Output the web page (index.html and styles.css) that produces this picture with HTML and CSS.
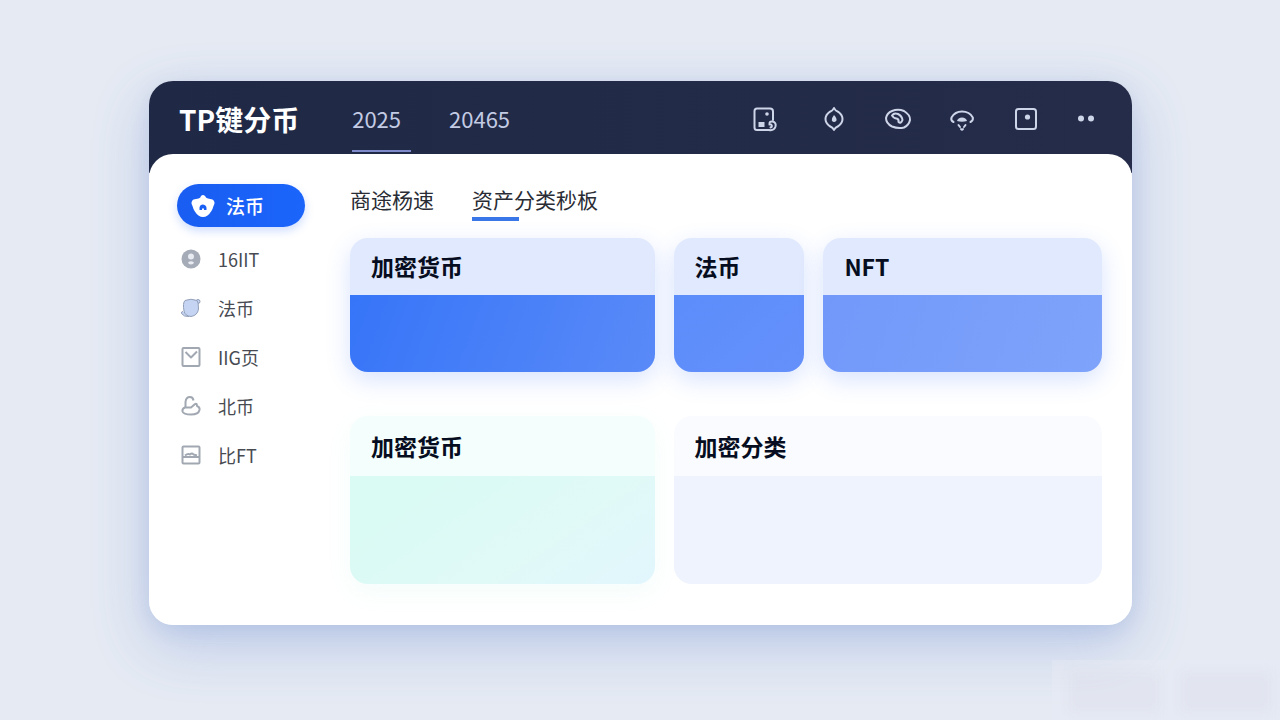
FILE: index.html
```html
<!DOCTYPE html>
<html lang="zh-CN">
<head>
    <meta charset="utf-8">
    <meta name="viewport" content="width=device-width, initial-scale=1">
    <title>TP键分币</title>
    <link rel="stylesheet" href="styles.css">
</head>
<body>
    <div class="window">
        <header class="topbar">
            <h1 class="brand">TP键分币</h1>
            <nav class="topnav">
                <a href="#" class="topnav-link active">2025</a>
                <a href="#" class="topnav-link">20465</a>
            </nav>
            <div class="actions">
                <button class="icon-button" aria-label="Files">
                    <svg width="38" height="28" viewBox="0 0 38 28">
                        <path d="M17 25H11Q8.500 25 8.500 22.500V6Q8.500 3.500 11 3.500H24Q27 3.500 27 6.500V15"/>
                        <path d="M23.500 19.500Q23 16 26.500 16.500Q30.500 17.500 29.500 21.500Q28 26 23 25L17 25M25 19.500Q27 21.500 24.500 22.500"/>
                        <rect class="fill" x="12.500" y="17" width="6" height="5"/>
                        <circle class="fill" cx="21" cy="9" r="1.800"/>
                    </svg>
                </button>
                <button class="icon-button" aria-label="Location">
                    <svg width="28" height="28" viewBox="0 0 28 28">
                        <path d="M14 3Q15 5.500 18.500 7Q22.500 10 22.500 14Q22.500 18 18.500 21Q15 22.500 14 25Q13 22.500 9.500 21Q5.500 18 5.500 14Q5.500 10 9.500 7Q13 5.500 14 3Z"/>
                        <path class="fill" d="M14 10Q17 13 16.500 15.500Q14 18.500 11.800 15.500Q11.500 13 14 10Z"/>
                    </svg>
                </button>
                <button class="icon-button" aria-label="View">
                    <svg width="28" height="28" viewBox="0 0 28 28">
                        <path d="M8 6Q14 3.500 20 6Q26.500 10 26 15Q25 20 20 22.500Q14 24 8 21.500Q2 18.500 2 13Q3 8 8 6Z"/>
                        <path d="M8 10.500Q10 7.500 14 9Q18 11 18.500 15Q17 19 14.500 17Q15 14 12.500 13.500Q10 13.500 8 10.500Z"/>
                    </svg>
                </button>
                <button class="icon-button" aria-label="Network">
                    <svg width="28" height="28" viewBox="0 0 28 28">
                        <path d="M5.500 17Q2.500 15.500 3.500 12.500Q7 6.500 14 6.500Q21.500 6.500 24.800 12.500Q25.500 15.500 22.500 17"/>
                        <path class="fill" d="M9 16Q10 12.500 14 12.500Q18 12.500 19 16Q14 17.500 9 16Z"/>
                        <path d="M10.500 20L12 22M17.500 20L16 22M13 24Q14 25.500 15 24"/>
                    </svg>
                </button>
                <button class="icon-button" aria-label="Card">
                    <svg width="28" height="28" viewBox="0 0 28 28">
                        <rect x="4" y="4" width="20" height="20" rx="2.500"/>
                        <circle class="fill" cx="15.500" cy="12" r="2.600"/>
                    </svg>
                </button>
                <button class="icon-button" aria-label="More">
                    <svg width="20" height="28" viewBox="0 0 20 28">
                        <circle class="fill" cx="5" cy="13.500" r="3"/>
                        <circle class="fill" cx="15" cy="13.500" r="3"/>
                    </svg>
                </button>
            </div>
        </header>

        <div class="panel">
            <nav class="sidebar">
                <a href="#" class="side-active">
                    <svg width="26" height="26" viewBox="0 0 26 26">
                        <path fill="#fff" d="M8.500 5.500Q10.500 5 11 3Q13 1 15 3Q16 5 18 5.500L22.500 6.500Q26 9 23.500 13Q22 19 17.500 22.500Q13 25.500 8.500 22.500Q4 19 2.500 13Q0 9 3.500 6.500Z"/>
                        <path fill="#1a60f5" d="M9.500 17V14.500Q10 11.500 13 11.500Q16.500 12 16.500 15V17H14V15.500H12V17Z"/>
                    </svg>
                    <span>法币</span>
                </a>
                <a href="#" class="side-link">
                    <svg width="22" height="22" viewBox="0 0 22 22">
                        <circle cx="11" cy="11" r="9.500" fill="#a5acb8"/>
                        <circle cx="11" cy="8.500" r="3" fill="#e8ebf2"/>
                        <path d="M8 14.500Q11 12 14 14.500Q13.500 16.500 11 16.500Q8.500 16.500 8 14.500Z" fill="#e8ebf2"/>
                    </svg>
                    <span>16IIT</span>
                </a>
                <a href="#" class="side-link">
                    <svg width="22" height="22" viewBox="0 0 22 22" fill="#c5d4f3" stroke="#929fb9">
                        <circle cx="18" cy="4.500" r="2"/>
                        <path d="M3 14.500Q1 14.500 1.500 16.500Q4 20 9 19.500"/>
                        <path d="M5 3.500Q11 1 17 3.500Q18.500 5 18.500 12Q17.500 18.500 11 19.500Q5 19 4 14Q2.500 6 5 3.500Z"/>
                    </svg>
                    <span>法币</span>
                </a>
                <a href="#" class="side-link">
                    <svg class="line-icon" width="22" height="22" viewBox="0 0 22 22">
                        <rect x="2.500" y="2" width="17" height="18" rx="1"/>
                        <path d="M5.500 6L11 11.500L17 5.500"/>
                    </svg>
                    <span>IIG页</span>
                </a>
                <a href="#" class="side-link">
                    <svg class="line-icon" width="22" height="22" viewBox="0 0 22 22">
                        <path d="M5.500 12V7Q6 2 10 2Q13 2 13.500 5.500"/>
                        <path d="M5 12.500H11L14.500 9.500Q17 7.500 17 11Q20 12 19.500 15Q18.500 19.500 11 19.500Q3.500 19.500 2.500 16.500Q2 13.500 5 12.500Z"/>
                    </svg>
                    <span>北币</span>
                </a>
                <a href="#" class="side-link">
                    <svg class="line-icon" width="22" height="22" viewBox="0 0 22 22">
                        <rect x="2.500" y="2.500" width="17" height="17" rx="1"/>
                        <path d="M5 11.500Q8 9 10 10.500Q12 8.500 13.500 10.500L17 11.500M3 13H19"/>
                    </svg>
                    <span>比FT</span>
                </a>
            </nav>

            <main class="content">
                <div class="tabs">
                    <button class="tab">商途杨速</button>
                    <button class="tab selected">资产分类秒板</button>
                </div>
                <div class="cards">
                    <section class="card crypto">
                        <h2 class="card-title">加密货币</h2>
                        <div class="card-body"></div>
                    </section>
                    <section class="card fiat">
                        <h2 class="card-title">法币</h2>
                        <div class="card-body"></div>
                    </section>
                    <section class="card nft">
                        <h2 class="card-title">NFT</h2>
                        <div class="card-body"></div>
                    </section>
                    <section class="card tall mint">
                        <h2 class="card-title">加密货币</h2>
                        <div class="card-body"></div>
                    </section>
                    <section class="card tall category">
                        <h2 class="card-title">加密分类</h2>
                        <div class="card-body"></div>
                    </section>
                </div>
            </main>
        </div>
    </div>
    <div class="watermark" aria-hidden="true">
        <span class="smudge"></span>
        <span class="smudge"></span>
    </div>
</body>
</html>
```
FILE: styles.css
```css
/* Global styles */
* {
    box-sizing: border-box;
}

body {
    margin: 0;
    padding: 81px 148px 32px 149px;
    min-height: 100vh;
    position: relative;
    overflow-x: hidden;
    background-color: #e5eaf3;
    color: #070d20;
    font-family: "Noto Sans CJK SC", "Noto Sans", sans-serif;
}

a {
    color: inherit;
    text-decoration: none;
}

button {
    padding: 0;
    border: none;
    background: none;
    color: inherit;
    font-family: inherit;
    cursor: pointer;
}

svg {
    display: block;
    flex-shrink: 0;
}

/* Window */
.window {
    border-radius: 24px;
    box-shadow: 0 20px 56px rgba(75, 115, 205, 0.28), 0 4px 20px rgba(75, 110, 180, 0.12);
}

/* Top bar, continues behind the rounded top of the panel */
.topbar {
    display: flex;
    align-items: flex-start;
    height: 92px;
    padding: 0 36px 0 30px;
    border-radius: 24px 24px 0 0;
    background: linear-gradient(90deg, #1f2945, #242c49);
    color: #c3cbe4;
}

.brand {
    margin: 0 53px 0 0;
    color: #fff;
    font-size: 28px;
    line-height: 76px;
    white-space: nowrap;
}

.topnav {
    display: flex;
    gap: 38px;
}

.topnav-link {
    height: 71px;
    padding-right: 10px;
    font-size: 22px;
    line-height: 74px;
}

.topnav-link.active {
    border-bottom: 2px solid #7f8acb;
}

.actions {
    display: flex;
    gap: 36px;
    margin-left: auto;
    padding-top: 24px;
}

.icon-button svg {
    fill: none;
    stroke: #cdd5e9;
    stroke-width: 2;
    stroke-linecap: round;
    stroke-linejoin: round;
}

.icon-button .fill {
    fill: #cdd5e9;
    stroke: none;
}

/* Panel */
.panel {
    display: flex;
    gap: 45px;
    margin-top: -19px;
    padding: 30px 30px 41px 28px;
    border-radius: 24px;
    background-color: #fff;
}

/* Sidebar */
.sidebar {
    flex: 0 0 128px;
}

.side-active {
    display: flex;
    align-items: center;
    gap: 10px;
    height: 43px;
    margin-bottom: 7px;
    padding-left: 13px;
    border-radius: 22px;
    background: linear-gradient(90deg, #195df2, #1b65fb);
    box-shadow: 0 4px 10px rgba(30, 100, 250, 0.22);
    color: #fff;
    font-size: 19px;
    font-weight: 500;
}

.side-link {
    display: flex;
    align-items: center;
    gap: 16px;
    height: 49px;
    padding-left: 3px;
    color: #484b52;
    font-size: 18px;
}

.line-icon {
    fill: none;
    stroke: #a2a8b2;
    stroke-width: 2;
    stroke-linejoin: round;
}

/* Tabs */
.content {
    flex: 1;
    min-width: 0;
}

.tabs {
    display: flex;
    gap: 38px;
    margin-bottom: 17px;
}

.tab {
    height: 37px;
    padding-bottom: 6px;
    color: #292c34;
    font-size: 21px;
    line-height: 31px;
}

.tab.selected {
    background: linear-gradient(#3976e8, #3976e8) left bottom / 47px 4px no-repeat;
}

/* Cards */
.cards {
    display: grid;
    grid-template-columns: 305fr 131fr 279fr;
    gap: 44px 19px;
}

.card {
    border-radius: 18px;
    background-color: #e0e9fd;
    box-shadow: 0 8px 24px rgba(60, 115, 250, 0.2);
}

.card-title {
    margin: 0;
    padding-left: 21px;
    font-size: 23px;
    font-weight: 700;
    line-height: 57px;
}

.card-body {
    height: 77px;
    border-radius: 0 0 18px 18px;
}

.crypto .card-body {
    background: linear-gradient(110deg, #3675f8, #5a8af8);
}

.fiat .card-body {
    background: linear-gradient(135deg, #5b8dfa, #6590fb);
}

.nft .card-body {
    background: linear-gradient(110deg, #7299fa, #7ea3fb);
}

.tall .card-title {
    line-height: 60px;
}

.tall .card-body {
    height: 108px;
}

.mint {
    background-color: #f4fefc;
    box-shadow: 0 8px 24px rgba(110, 225, 205, 0.08);
}

.mint .card-body {
    background: linear-gradient(145deg, #dafaf4 20%, #e0faf7 60%, #e2f6fd);
}

.category {
    grid-column: span 2;
    background-color: #fafbfe;
    box-shadow: none;
}

.category .card-body {
    background-color: #eff3fd;
}

/* Faint mark in the corner of the page */
.watermark {
    position: absolute;
    right: 0;
    bottom: 0;
    display: flex;
    gap: 20px;
    padding: 12px 8px 8px 16px;
    background-color: rgba(232, 235, 245, 0.4);
}

.smudge {
    width: 92px;
    height: 40px;
    background-color: rgba(210, 212, 226, 0.2);
    filter: blur(6px);
}
```
